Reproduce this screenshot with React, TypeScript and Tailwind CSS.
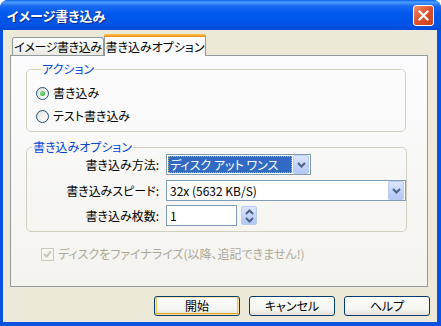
import React from 'react';

const jp = "font-['Noto_Sans_CJK_JP',sans-serif] [font-feature-settings:'palt']";

function Chevron({ dir = 'down' }: { dir?: 'down' | 'up' }) {
  return (
    <svg width="9" height="6" viewBox="0 0 9 6" className={dir === 'up' ? 'rotate-180' : ''}>
      <path d="M1 1 L4.5 4.5 L8 1" fill="none" stroke="#4D6185" strokeWidth="2" />
    </svg>
  );
}

function DropButton({ className = '' }: { className?: string }) {
  return (
    <div
      className={`w-[16px] h-[19px] rounded-[2px] border border-[#B9CBF3] bg-[linear-gradient(to_bottom,#DCE6FE,#C0D1FA_60%,#B4C8F6)] flex items-center justify-center ${className}`}
    >
      <Chevron />
    </div>
  );
}

function Radio({ checked }: { checked?: boolean }) {
  return (
    <div className="w-[13px] h-[13px] rounded-full border border-[#1C5180] bg-[radial-gradient(circle_at_70%_70%,#FFFFFF,#DCDCD5)] flex items-center justify-center">
      {checked && <div className="w-[5px] h-[5px] rounded-full bg-[radial-gradient(circle_at_35%_35%,#8EE58E,#21A121)]" />}
    </div>
  );
}

function XpButton({ label, isDefault }: { label: string; isDefault?: boolean }) {
  return (
    <div
      className={`w-[86px] h-[20px] rounded-[3px] border border-[#003C74] bg-[linear-gradient(to_bottom,#FFFFFF,#F4F4F0_70%,#E3E2DA)] flex items-center justify-center text-[12px] text-black ${
        isDefault ? 'shadow-[inset_0_0_0_1px_#FFE7A2,inset_0_-2px_0_#E5A01A,inset_2px_0_0_#F8C358,inset_-2px_0_0_#F8C358]' : ''
      }`}
    >
      {label}
    </div>
  );
}

export default function App() {
  return (
    <div className={`w-[441px] h-[326px] flex flex-col bg-[#0A52E2] rounded-t-[8px] overflow-hidden ${jp}`}>
      {/* Title bar */}
      <div className="h-[30px] shrink-0 flex items-center justify-between pl-[7px] pr-[7px] bg-[linear-gradient(to_bottom,#0A5EEB_0%,#4CA0FF_7%,#1A6AF2_20%,#0058EE_45%,#0054E6_80%,#0049DA_100%)]">
        <span className="text-white font-bold text-[13px] leading-none [text-shadow:1px_1px_0_#0A2A8A]">イメージ書き込み</span>
        <div className="w-[21px] h-[21px] rounded-[3px] border border-white bg-[linear-gradient(135deg,#F0906A,#E0502B_50%,#C8401E)] flex items-center justify-center">
          <svg width="11" height="11" viewBox="0 0 11 11">
            <path d="M1.5 1.5 L9.5 9.5 M9.5 1.5 L1.5 9.5" stroke="#FFFFFF" strokeWidth="2.2" strokeLinecap="square" />
          </svg>
        </div>
      </div>

      {/* Body */}
      <div className="flex-1 ml-[3px] mr-[4px] mb-[4px] bg-[#ECE9D8] px-[7px] pt-[4px] flex flex-col">
        {/* Tabs */}
        <div className="h-[21px] flex items-end pl-[2px] relative z-10">
          <div className="w-[92px] h-[18px] border border-b-0 border-[#919B9C] rounded-t-[3px] bg-[linear-gradient(to_bottom,#FFFFFF,#F3F3EF_60%,#E9E8E0)] flex items-center justify-center text-[12px] text-black whitespace-nowrap tracking-[-0.4px]">
            イメージ書き込み
          </div>
          <div className="w-[102px] h-[22px] -mb-[1px] border-x border-[#919B9C] rounded-t-[3px] bg-[#FCFCFE] flex flex-col">
            <div className="h-[3px] rounded-t-[2px] bg-[linear-gradient(to_bottom,#FFC83C,#E68B2C)] -mx-[1px]" />
            <div className="flex-1 flex items-center justify-center text-[12px] text-black whitespace-nowrap">書き込みオプション</div>
          </div>
        </div>

        {/* Panel */}
        <div className="w-[418px] h-[232px] border border-[#919B9C] bg-[linear-gradient(to_bottom,#FCFCFE,#F4F3EE)] px-[15px] pt-[6px] flex flex-col text-[12px] text-black">
          <fieldset className="w-[380px] border border-[#D0D0BF] rounded-[5px] pl-[9px] pt-[7px] pb-[5px] flex flex-col gap-[3px]">
            <legend className="ml-[5px] px-[1px] text-[#0046D5] leading-[14px]">アクション</legend>
            <div className="h-[20px] flex items-center gap-[4px]">
              <Radio checked />
              <span>書き込み</span>
            </div>
            <div className="h-[20px] flex items-center gap-[4px]">
              <Radio />
              <span>テスト書き込み</span>
            </div>
          </fieldset>

          <fieldset className="w-[380px] mt-[8px] border border-[#D0D0BF] rounded-[5px] pb-[5px] flex flex-col">
            <legend className="ml-[5px] px-[1px] text-[#0046D5] leading-[14px]">書き込みオプション</legend>
            <div className="h-[21px] flex items-center">
              <span className="w-[132px] text-right">書き込み方法:</span>
              <div className="ml-[7px] w-[145px] h-[21px] border border-[#7F9DB9] bg-white flex items-center pl-[1px] pr-[1px] justify-between">
                <div className="w-[124px] h-[17px] bg-[#316AC5] text-white border border-dotted border-[#C9B06A] flex items-center pl-[1px] leading-none">
                  ディスク アット ワンス
                </div>
                <DropButton />
              </div>
            </div>
            <div className="h-[21px] mt-[5px] flex items-center">
              <span className="w-[132px] text-right">書き込みスピード:</span>
              <div className="ml-[7px] w-[240px] h-[21px] border border-[#7F9DB9] bg-white flex items-center pl-[3px] pr-[1px] justify-between">
                <span className="leading-none">32x (5632 KB/S)</span>
                <DropButton />
              </div>
            </div>
            <div className="h-[21px] mt-[4px] flex items-center">
              <span className="w-[132px] text-right">書き込み枚数:</span>
              <div className="ml-[7px] w-[71px] h-[21px] border border-[#7F9DB9] bg-white flex items-center pl-[3px] leading-none">1</div>
              <div className="ml-[4px] w-[16px] h-[19px] rounded-[2px] border border-[#B9CBF3] bg-[linear-gradient(to_bottom,#DCE6FE,#C0D1FA_60%,#B4C8F6)] flex flex-col items-center justify-center gap-[2px]">
                <Chevron dir="up" />
                <Chevron />
              </div>
            </div>
          </fieldset>

          <div className="mt-[13px] pl-[15px] flex items-center gap-[4px] text-[#ACA899]">
            <div className="w-[13px] h-[13px] border border-[#CAC8BB] bg-[#F6F5F0] flex items-center justify-center">
              <svg width="9" height="9" viewBox="0 0 9 9">
                <path d="M1 4 L3.5 6.5 L8 1.5" fill="none" stroke="#CAC8BB" strokeWidth="2" />
              </svg>
            </div>
            <span>ディスクをファイナライズ(以降、追記できません!)</span>
          </div>
        </div>

        {/* Buttons */}
        <div className="mt-[9px] flex justify-end gap-[9px]">
          <XpButton label="開始" isDefault />
          <XpButton label="キャンセル" />
          <XpButton label="ヘルプ" />
        </div>
      </div>
    </div>
  );
}
